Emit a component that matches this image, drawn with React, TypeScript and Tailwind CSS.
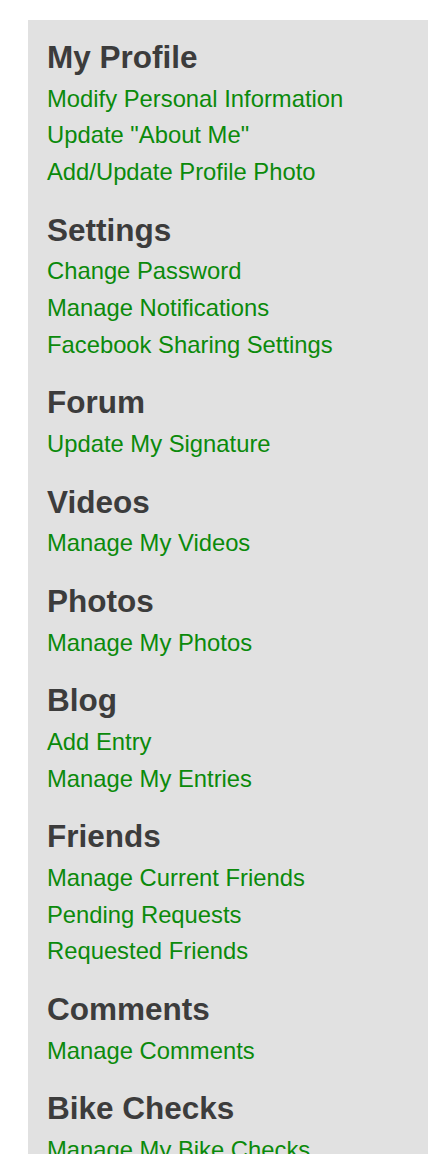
import React from "react";

const sections: { title: string; links: string[] }[] = [
  { title: "My Profile", links: ["Modify Personal Information", 'Update "About Me"', "Add/Update Profile Photo"] },
  { title: "Settings", links: ["Change Password", "Manage Notifications", "Facebook Sharing Settings"] },
  { title: "Forum", links: ["Update My Signature"] },
  { title: "Videos", links: ["Manage My Videos"] },
  { title: "Photos", links: ["Manage My Photos"] },
  { title: "Blog", links: ["Add Entry", "Manage My Entries"] },
  { title: "Friends", links: ["Manage Current Friends", "Pending Requests", "Requested Friends"] },
  { title: "Comments", links: ["Manage Comments"] },
  { title: "Bike Checks", links: ["Manage My Bike Checks"] },
];

export default function App() {
  return (
    <div className="h-[1154px] overflow-hidden bg-white pt-5 pl-7" style={{ fontFamily: '"Liberation Sans", Arial, sans-serif' }}>
      <div className="w-[400px] bg-[#e1e1e1] pl-[19px] pt-[18px] pb-10">
        {sections.map((s, i) => (
          <div key={s.title} className={i === 0 ? "" : "mt-[20px]"}>
            <h2 className="text-[31.5px] leading-[38px] font-bold text-[#3c3c3c] mb-[4.6px]">{s.title}</h2>
            <ul>
              {s.links.map((l) => (
                <li key={l} className="text-[23.8px] leading-[36.7px] text-[#0b8a0b]">
                  <a href="#">{l}</a>
                </li>
              ))}
            </ul>
          </div>
        ))}
      </div>
    </div>
  );
}
